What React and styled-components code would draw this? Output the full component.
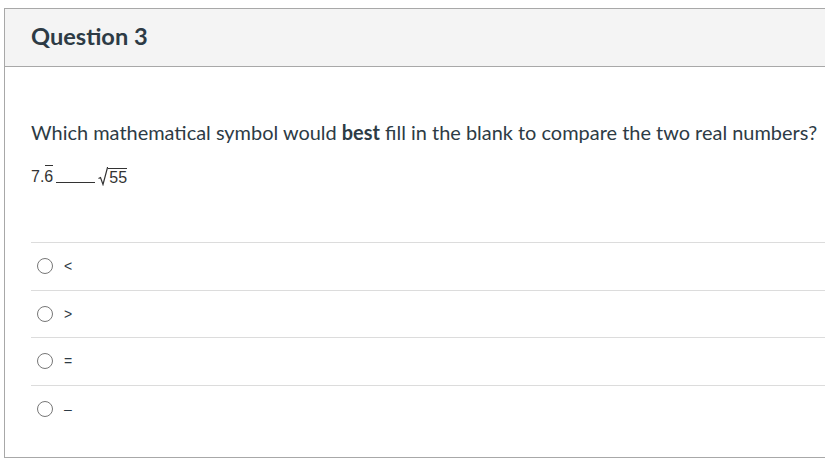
import React from 'react';
import styled, { createGlobalStyle } from 'styled-components';

const GlobalStyle = createGlobalStyle`
  body {
    margin: 0;
    background: #fff;
    overflow: hidden;
    font-family: Lato, "Liberation Sans", sans-serif;
  }
`;

const Page = styled.div`
  padding: 8px 0 0 4px;
  width: 821px;
  overflow: hidden;
`;

const Panel = styled.div`
  width: 900px;
  height: 450px;
  border: 1px solid #a8a8a8;
  border-right: none;
  box-sizing: border-box;
  display: flex;
  flex-direction: column;
`;

const Header = styled.div`
  height: 58px;
  flex: none;
  background: #f4f4f4;
  border-bottom: 1px solid #a8a8a8;
  display: flex;
  align-items: center;
  padding-left: 26px;
  padding-bottom: 4px;
  box-sizing: border-box;
`;

const Title = styled.h2`
  margin: 0;
  font-size: 23.6px;
  font-weight: 700;
  color: #2d3b45;
`;

const Body = styled.div`
  padding: 52px 0 0 26px;
  color: #2d3b45;
`;

const Prompt = styled.p`
  margin: 0;
  font-size: 19.95px;
  line-height: 26px;
  white-space: nowrap;
`;

const MathLine = styled.div`
  margin-top: 19px;
  display: flex;
  align-items: flex-end;
  font-family: "Liberation Sans", Arial, sans-serif;
  font-size: 16px;
  color: #333;
  height: 22px;
`;

const Repeat = styled.span`
  position: relative;
  &::before {
    content: '';
    position: absolute;
    left: 1px;
    right: 0;
    top: -3px;
    border-top: 1px solid #333;
  }
`;

const Blank = styled.span`
  display: inline-block;
  width: 39px;
  margin: 0 3px 3px 3px;
  border-bottom: 1px solid #333;
  height: 1px;
`;

const Root = styled.span`
  display: inline-flex;
  align-items: flex-end;
`;

const Radicand = styled.span`
  border-top: 1px solid #333;
  padding-top: 1px;
  padding-left: 1px;
  line-height: 16px;
`;

const Answers = styled.div`
  margin-top: 56px;
`;

const Answer = styled.label`
  display: flex;
  align-items: center;
  height: 47.5px;
  border-top: 1px solid #dcdcdc;
  box-sizing: border-box;
  padding-left: 6px;
  gap: 11px;
`;

const Radio = styled.span`
  width: 16px;
  height: 16px;
  border: 1px solid #777;
  border-radius: 50%;
  box-sizing: border-box;
  background: #fff;
`;

const AnswerText = styled.span`
  font-family: "Liberation Sans", Arial, sans-serif;
  font-size: 14px;
  color: #2d3b45;
`;

const options = ['<', '>', '=', '\u2013'];

export default function App() {
  return (
    <>
      <GlobalStyle />
      <Page>
        <Panel>
          <Header>
            <Title>Question 3</Title>
          </Header>
          <Body>
            <Prompt>
              Which mathematical symbol would <b>best</b> fill in the blank to compare the two real numbers?
            </Prompt>
            <MathLine>
              7.<Repeat>6</Repeat>
              <Blank />
              <Root>
                <svg width="10" height="19" viewBox="0 0 10 19">
                  <path d="M0.5 11.5 L2.5 10.5 L5 17.5 L9.5 0.5 L10 0.5" fill="none" stroke="#333" strokeWidth="1.2" />
                </svg>
                <Radicand>55</Radicand>
              </Root>
            </MathLine>
            <Answers>
              {options.map((o) => (
                <Answer key={o}>
                  <Radio />
                  <AnswerText>{o}</AnswerText>
                </Answer>
              ))}
            </Answers>
          </Body>
        </Panel>
      </Page>
    </>
  );
}
